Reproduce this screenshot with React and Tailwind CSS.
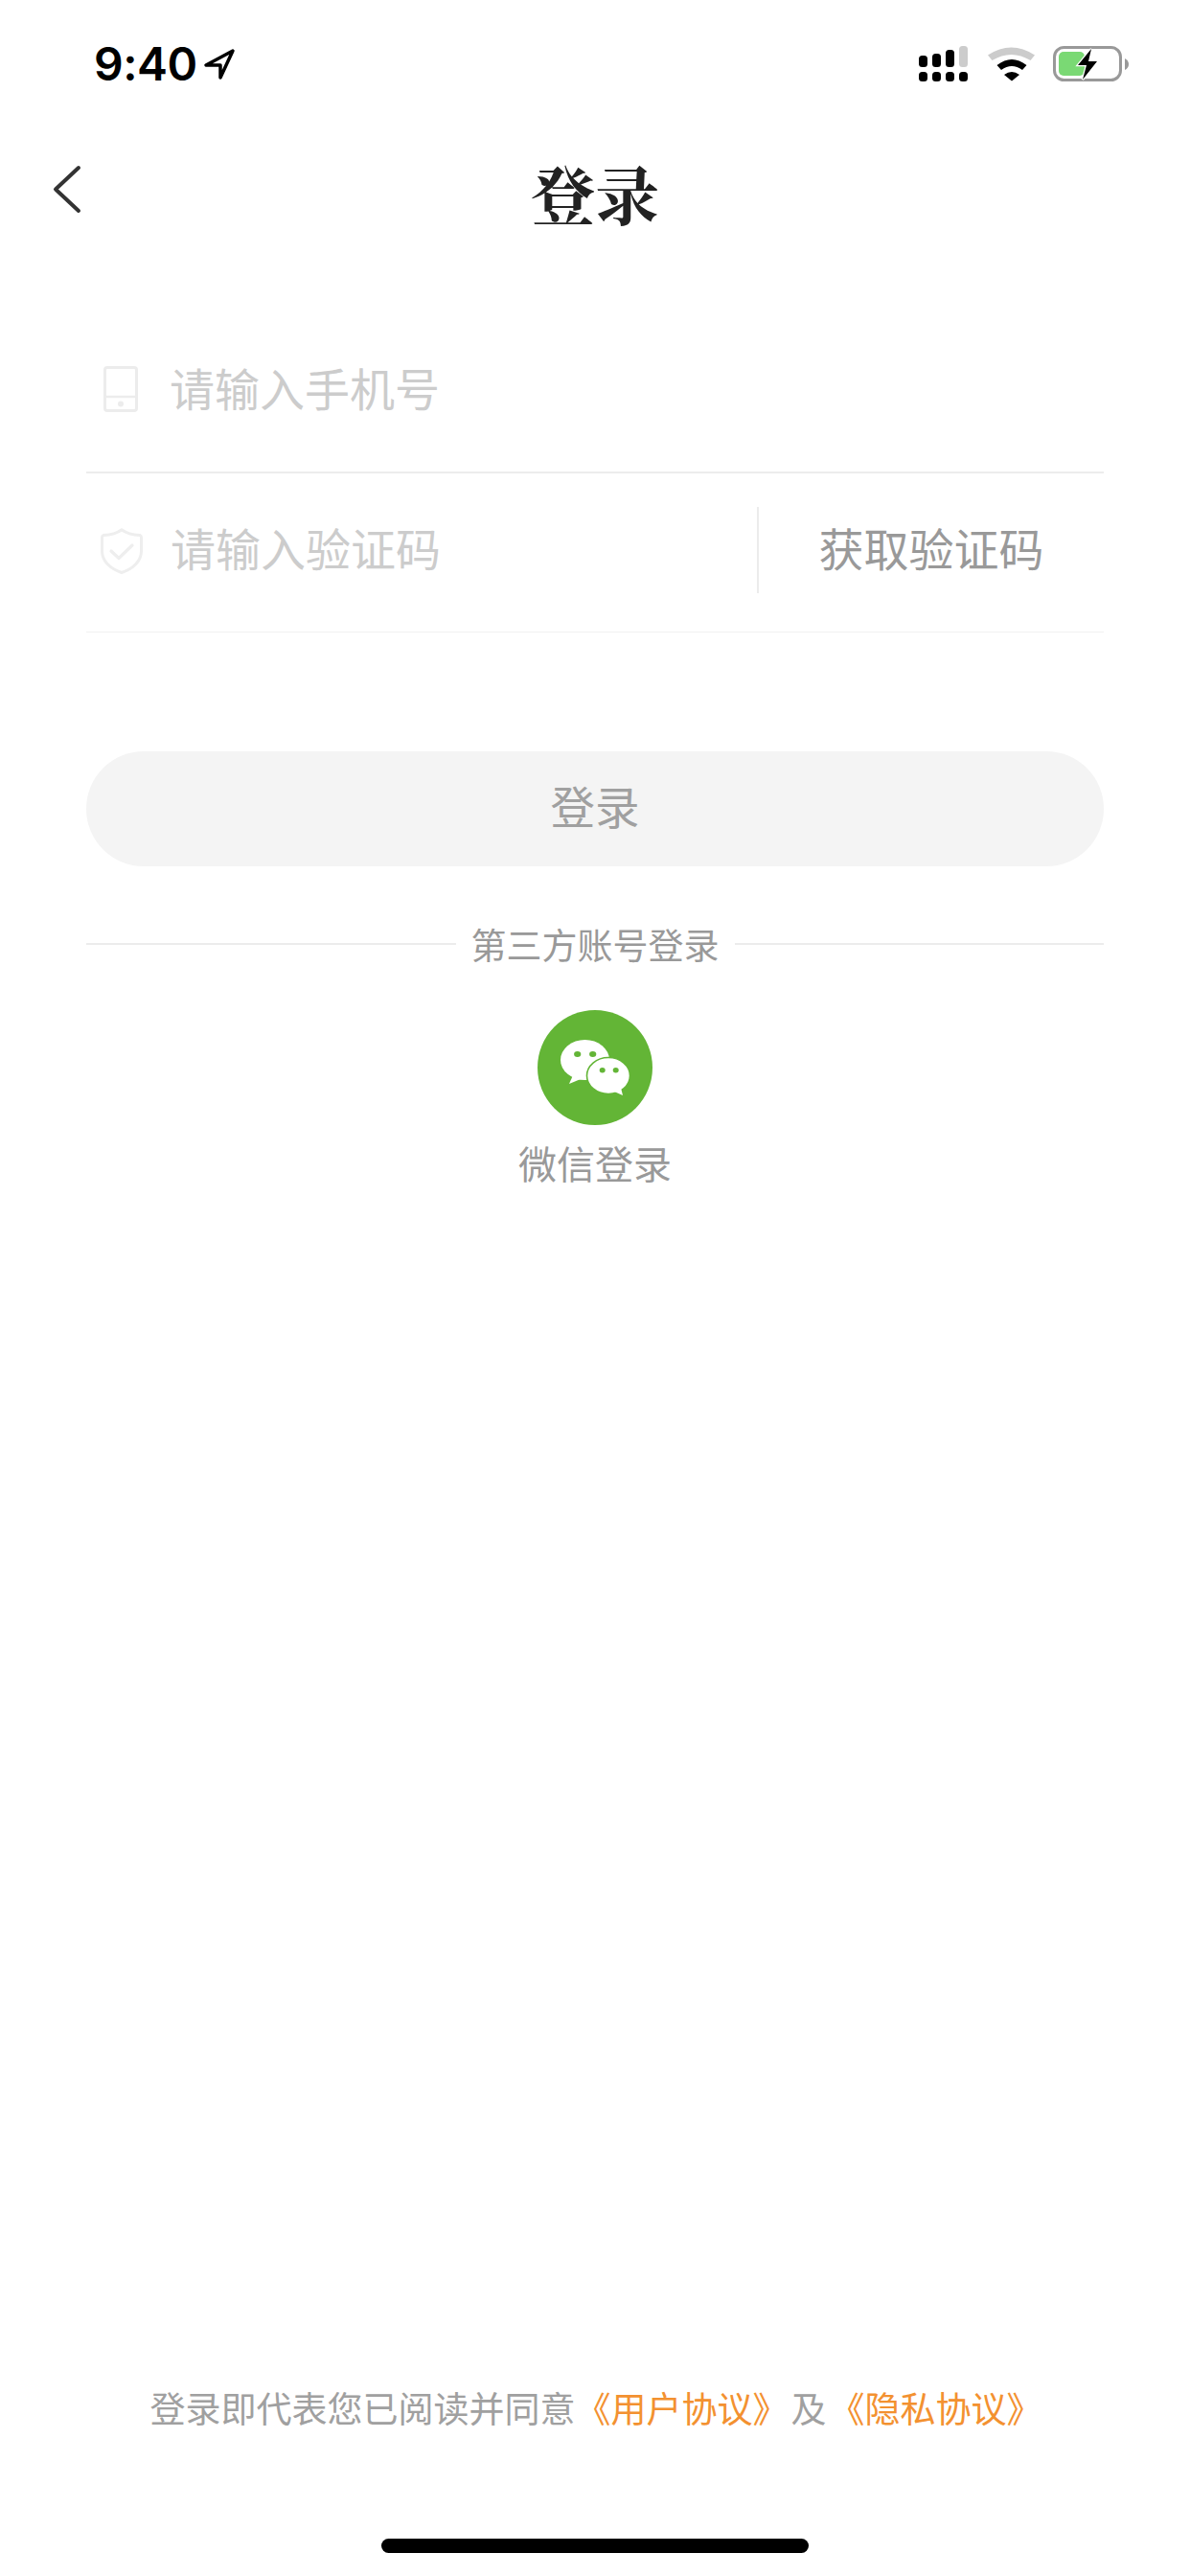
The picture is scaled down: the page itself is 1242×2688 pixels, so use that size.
const Signal = () => (
  <svg width="52" height="38" viewBox="0 0 52 38" className="block">
    <rect x="0" y="10" width="9" height="12" rx="3.5" fill="#000" />
    <rect x="14" y="8" width="9" height="14" rx="3.5" fill="#000" />
    <rect x="28" y="4" width="9" height="18" rx="3.5" fill="#000" />
    <rect x="42" y="0" width="9" height="22" rx="3.5" fill="#ccc" />
    <rect x="0" y="27" width="9" height="10" rx="3.5" fill="#000" />
    <rect x="14" y="27" width="9" height="10" rx="3.5" fill="#000" />
    <rect x="28" y="27" width="9" height="10" rx="3.5" fill="#000" />
    <rect x="42" y="27" width="9" height="10" rx="3.5" fill="#000" />
  </svg>
);

const Wifi = () => (
  <svg width="50" height="38" viewBox="0 0 50 38" className="block">
    <path d="M0 9.5 Q24.5 -6.5 49 9.5 L44.5 15 Q24.5 3 4.5 15 Z" fill="#ccc" />
    <path d="M9.5 20 Q25 8 40.5 20 L36 25 Q25 17 14 25 Z" fill="#000" />
    <path d="M17 30 Q25 24 33 30 L25 36.5 Z" fill="#000" />
  </svg>
);

const Battery = () => (
  <svg width="80" height="38" viewBox="0 0 80 38" className="block">
    <rect x="1.5" y="1.5" width="69" height="34" rx="10" fill="none" stroke="#999" strokeWidth="3" />
    <rect x="6" y="6" width="27" height="25" rx="5" fill="#7ad974" />
    <path d="M75 13 Q79 15 79 19 Q79 23 75 25 Z" fill="#999" />
    <path d="M40 3 L26 20 L35 20 L31 35 L46 16 L37 16 Z" fill="#000" stroke="#fff" strokeWidth="2.5" paintOrder="stroke" />
  </svg>
);

const Arrow = () => (
  <svg width="34" height="34" viewBox="0 0 34 34" className="block">
    <path d="M31 3 L3 18 L18 18 L18 31 Z" fill="none" stroke="#000" strokeWidth="3.5" strokeLinejoin="round" />
  </svg>
);

const Chevron = () => (
  <svg width="32" height="52" viewBox="0 0 32 52" className="block">
    <path d="M28 3 L4 25.5 L28 48" fill="none" stroke="#333" strokeWidth="4" strokeLinecap="round" strokeLinejoin="round" />
  </svg>
);

const Phone = () => (
  <svg width="36" height="48" viewBox="0 0 36 48" className="block">
    <rect x="1.5" y="1.5" width="33" height="45" rx="2.5" fill="none" stroke="#ececec" strokeWidth="3" />
    <path d="M2 32 H34" stroke="#ececec" strokeWidth="2.5" />
    <circle cx="18" cy="39.5" r="3" fill="#ececec" />
  </svg>
);

const Shield = () => (
  <svg width="44" height="48" viewBox="0 0 44 48" className="block">
    <path d="M22 1.7 Q29 7 41 7.5 Q42.5 8 42.5 10 V24 C42.5 35 33 43 22 46.5 C11 43 1.5 35 1.5 24 V10 Q1.5 8 3 7.5 Q15 7 22 1.7 Z" fill="none" stroke="#eeeeee" strokeWidth="3" strokeLinejoin="round" />
    <path d="M11 24 L19 31.5 L33 18" fill="none" stroke="#eeeeee" strokeWidth="3.2" strokeLinecap="round" strokeLinejoin="round" />
  </svg>
);

const WeChat = () => (
  <svg width="120" height="120" viewBox="0 0 120 120" className="block">
    <circle cx="60" cy="60" r="60" fill="#63b536" />
    <ellipse cx="49.5" cy="52" rx="25.5" ry="21" fill="#fff" />
    <path d="M37 68 L33 77 L45 72 Z" fill="#fff" />
    <ellipse cx="74" cy="68.5" rx="22.5" ry="19" fill="#fff" stroke="#63b536" strokeWidth="1.6" />
    <path d="M80 85 L89 89 L87 81 Z" fill="#fff" />
    <ellipse cx="41.7" cy="46" rx="3.6" ry="3" fill="#63b536" />
    <ellipse cx="57.7" cy="46" rx="3.6" ry="3" fill="#63b536" />
    <ellipse cx="67.7" cy="62.7" rx="3" ry="2.7" fill="#63b536" />
    <ellipse cx="81.7" cy="62.7" rx="3" ry="2.7" fill="#63b536" />
  </svg>
);

export default function App() {
  return (
    <div className="w-[1242px] h-[2688px] bg-white flex flex-col overflow-hidden font-['Noto_Sans_CJK_SC','Noto_Sans',sans-serif]">
      {/* status bar */}
      <div className="h-[130px] pt-[48px] pl-[98px] pr-[63px] flex items-start justify-between">
        <div className="flex items-center h-[38px] gap-[6px]">
          <span className="font-['Inter',sans-serif] font-semibold text-[48px] leading-[38px] text-black tracking-[-0.5px]">9:40</span>
          <Arrow />
        </div>
        <div className="flex items-start">
          <Signal />
          <div className="ml-[20px]"><Wifi /></div>
          <div className="ml-[18px]"><Battery /></div>
        </div>
      </div>

      {/* nav */}
      <div className="h-[150px] flex items-center justify-center relative">
        <div className="absolute left-[54px] top-[42px]"><Chevron /></div>
        <span className="font-['Noto_Serif_CJK_SC','Noto_Sans_CJK_SC',serif] font-bold text-[67px] leading-none text-[#222222] -translate-y-[4px]">登录</span>
      </div>

      {/* form */}
      <div className="px-[90px] flex flex-col">
        <div className="h-[214px] pt-[84px] border-b-2 border-[#ececec] box-border">
          <div className="h-[80px] flex items-center pl-[18px]">
            <div className="mt-[3px]"><Phone /></div>
            <span className="ml-[33px] pb-[2px] text-[47px] leading-none text-[#cccccc]">请输入手机号</span>
          </div>
        </div>
        <div className="h-[166px] pb-[6px] flex items-center border-b border-[#f1f1f1] box-border">
          <div className="flex-1 flex items-center pl-[15px]">
            <div className="mt-[2px]"><Shield /></div>
            <span className="ml-[29px] pb-[6px] text-[47px] leading-none text-[#cccccc]">请输入验证码</span>
          </div>
          <div className="w-[2px] h-[90px] bg-[#ececec]" />
          <div className="w-[360px] pb-[6px] text-center text-[47px] leading-none text-[#999999]">获取验证码</div>
        </div>

        <div className="mt-[124px] h-[120px] pb-[8px] rounded-[60px] bg-[#f4f4f4] flex items-center justify-center text-[46.5px] leading-none text-[#a0a0a0]">登录</div>

        <div className="mt-[61px] h-[40px] flex items-center">
          <div className="flex-1 h-[2px] bg-[#ececec]" />
          <span className="mx-[16px] text-[37px] leading-none text-[#999999]">第三方账号登录</span>
          <div className="flex-1 h-[2px] bg-[#ececec]" />
        </div>

        <div className="mt-[49px] flex flex-col items-center">
          <WeChat />
          <span className="mt-[15px] text-[40px] leading-[48px] text-[#999999]">微信登录</span>
        </div>
      </div>

      {/* footer */}
      <div className="mt-auto flex flex-col items-center">
        <div className="pl-[2px] text-[37px] leading-[44px] whitespace-nowrap text-[#a0a0a0]">
          登录即代表您已阅读并同意<span className="text-[#f39130]">《用户协议》</span><span className="ml-[3px]">及</span><span className="ml-[3px] text-[#f39130]">《隐私协议》</span>
        </div>
        <div className="mt-[115px] mb-[24px] w-[446px] h-[15px] rounded-full bg-black" />
      </div>
    </div>
  );
}
